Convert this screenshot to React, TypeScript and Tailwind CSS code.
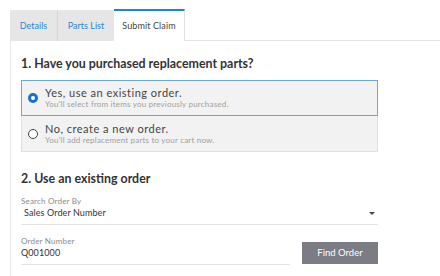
import React from "react";

export default function App() {
  return (
    <div className="w-[440px] h-[276px] bg-white overflow-hidden" style={{ fontFamily: "Lato, 'Open Sans', sans-serif" }}>
      {/* Tabs */}
      <div className="flex pt-[9px] pl-[10px]">
        <div className="w-[48px] h-[31px] mt-[1px] bg-[#e6e6e6] border-r border-[#d6d6d6] flex items-center justify-center text-[9px] text-[#2a86d6]">Details</div>
        <div className="w-[56px] h-[31px] mt-[1px] bg-[#e6e6e6] flex items-center justify-center text-[9px] text-[#2a86d6]">Parts List</div>
        <div className="w-[71px] h-[32px] bg-white border-t-2 border-[#1a82e0] border-r border-r-[#e2e2e2] flex items-center justify-center text-[9px] tracking-[0.1px] text-[#444]">Submit Claim</div>
        <div className="flex-1 border-b border-[#e4e4e4]" />
      </div>
      {/* Content */}
      <div className="ml-[10px] border-l border-[#e8e8e8] pl-[10px] h-[240px] mt-[-1px]">
        <div className="pt-[16px] text-[12.4px] font-bold text-[#333] leading-[16px]">1. Have you purchased replacement parts?</div>
        <div className="mt-[8px] w-[357px]">
          <div className="h-[36px] bg-[#f2f2f2] border border-[#6aa6e0] flex items-center pl-[6px]">
            <div className="w-[10px] h-[10px] rounded-full bg-[#1a6fc9] flex items-center justify-center">
              <div className="w-[4px] h-[4px] rounded-full bg-white" />
            </div>
            <div className="ml-[7px] flex flex-col">
              <span className="text-[11px] leading-[13px] tracking-[0.5px] text-[#444]">Yes, use an existing order.</span>
              <span className="text-[8px] leading-[11px] tracking-[0.2px] text-[#a0a0a0]">You'll select from items you previously purchased.</span>
            </div>
          </div>
          <div className="h-[36px] bg-[#f2f2f2] border border-t-0 border-[#e0e0e0] flex items-center pl-[6px]">
            <div className="w-[10px] h-[10px] rounded-full border border-[#444] bg-white" />
            <div className="ml-[7px] flex flex-col">
              <span className="text-[11px] leading-[13px] tracking-[0.5px] text-[#444]">No, create a new order.</span>
              <span className="text-[8px] leading-[11px] tracking-[0.2px] text-[#a0a0a0]">You'll add replacement parts to your cart now.</span>
            </div>
          </div>
        </div>
        <div className="mt-[19px] text-[12.4px] font-bold text-[#333] leading-[16px]">2. Use an existing order</div>
        <div className="w-[357px] mt-[9px] border-b border-[#e2e2e2] pb-[4px]">
          <div className="text-[8px] leading-[10px] tracking-[0.2px] text-[#8a8a8a]">Search Order By</div>
          <div className="flex items-center justify-between pl-[3px] pr-[3px]">
            <span className="text-[9px] leading-[14px] tracking-[0.1px] text-[#333]">Sales Order Number</span>
            <svg width="6" height="3" viewBox="0 0 6 3"><path d="M0 0h6L3 3z" fill="#444" /></svg>
          </div>
        </div>
        <div className="flex w-[357px] mt-[11px] items-end">
          <div className="w-[269px] border-b border-[#e2e2e2] pb-[4px]">
            <div className="text-[8px] leading-[10px] tracking-[0.2px] text-[#8a8a8a]">Order Number</div>
            <div className="text-[9px] leading-[14px] tracking-[0.1px] text-[#333]">Q001000</div>
          </div>
          <div className="ml-auto w-[76px] h-[22px] mb-[1px] bg-[#7c7c84] flex items-center justify-center text-[9.5px] text-white">Find Order</div>
        </div>
      </div>
    </div>
  );
}
